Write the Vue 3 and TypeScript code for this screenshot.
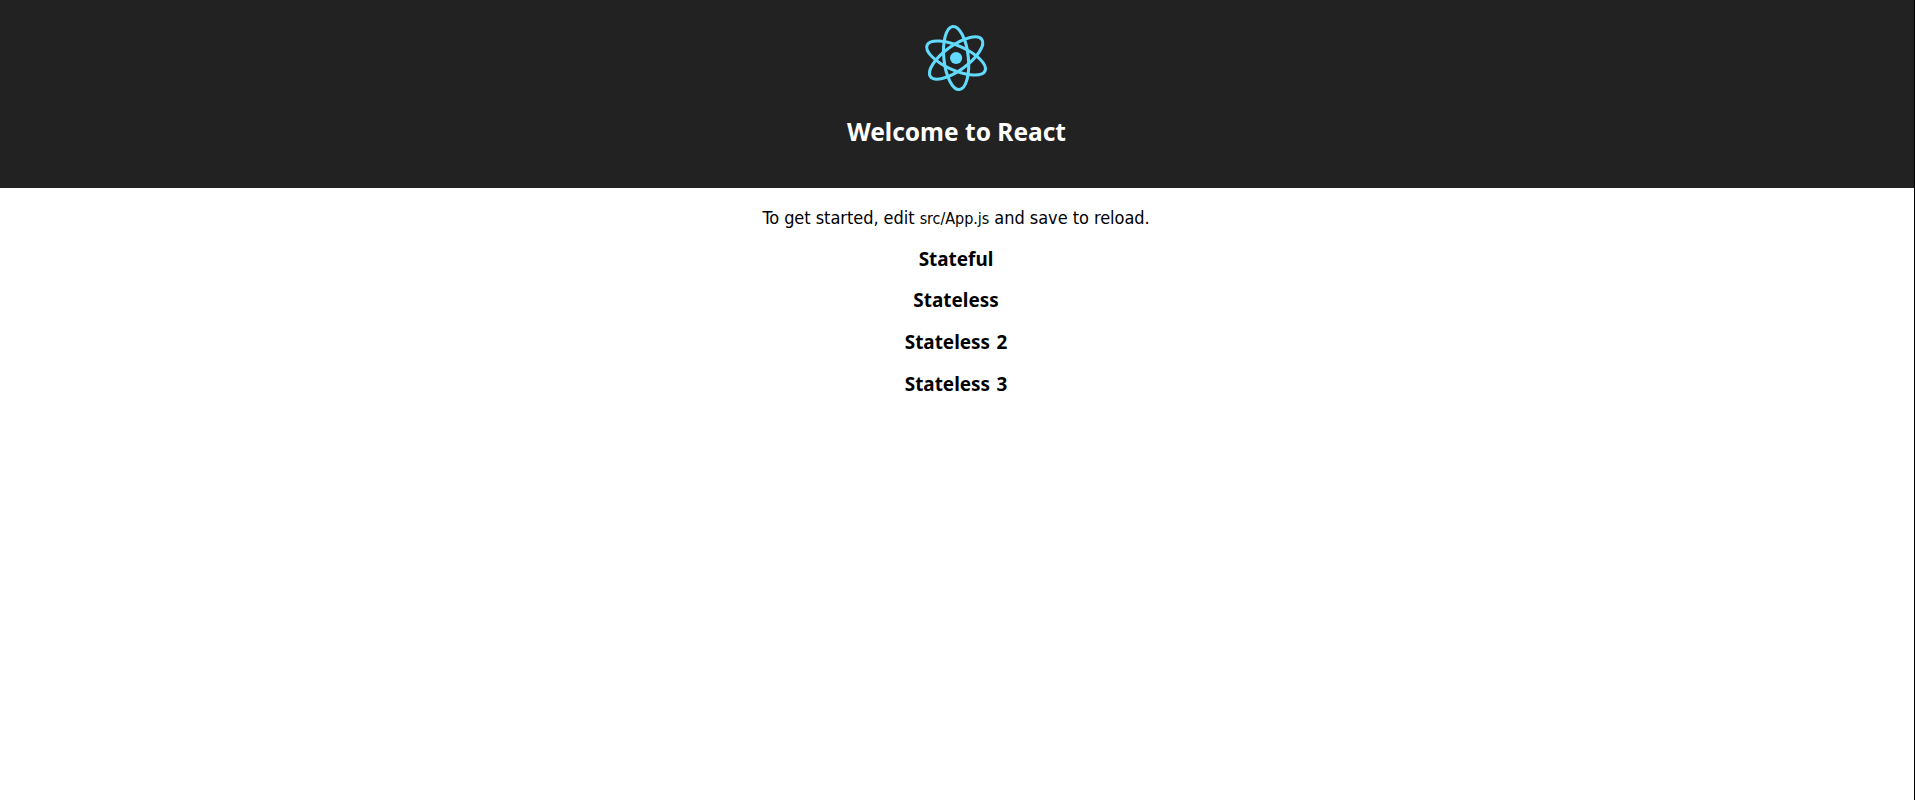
<script setup lang="ts">
interface Entry {
  id: number
  label: string
}

const entries: Entry[] = [
  { id: 1, label: 'Stateful' },
  { id: 2, label: 'Stateless' },
  { id: 3, label: 'Stateless 2' },
  { id: 4, label: 'Stateless 3' },
]

const orbits: number[] = [24, 84, 144]
</script>

<template>
  <div class="app">
    <header class="header">
      <svg class="logo" viewBox="-14 -14 28 28" aria-label="logo">
        <circle r="2.13" fill="#61dafb" />
        <g fill="none" stroke="#61dafb" stroke-width="1.08">
          <ellipse v-for="a in orbits" :key="a" rx="11.1" ry="4.28" :transform="`rotate(${a})`" />
        </g>
      </svg>
      <h2 class="title">Welcome to React</h2>
    </header>
    <main class="content">
      <p class="intro">To get started, edit <code>src/App.js</code> and save to reload.</p>
      <h3 v-for="entry in entries" :key="entry.id" class="entry">{{ entry.label }}</h3>
    </main>
  </div>
</template>

<style>
body {
  margin: 0;
  background: #fff;
}
</style>

<style scoped>
.app {
  box-sizing: border-box;
  height: 800px;
  border-right: 1px solid #000;
  overflow: hidden;
  text-align: center;
  color: #000;
  font-family: "Noto Sans", Tahoma, sans-serif;
}
.header {
  box-sizing: border-box;
  height: 188px;
  padding: 18px 1px 0 0;
  background: #222;
  color: #fff;
}
.content {
  padding-right: 2px;
}
.logo {
  display: block;
  width: 80px;
  height: 80px;
  margin: 0 auto;
  transform: translateX(-0.9px);
}
.title {
  margin: 19px 0 0;
  font-size: 24.5px;
  line-height: 29px;
}
.intro {
  margin: 20px 0 18.5px;
  font-family: "DejaVu Sans Condensed", "DejaVu Sans", sans-serif;
  font-stretch: condensed;
  font-size: 18px;
  line-height: 20px;
  letter-spacing: -0.04px;
}
.intro code {
  font-family: inherit;
  font-size: 16px;
}
.entry {
  margin: 0 0 18.7px;
  font-size: 18.9px;
  line-height: 23px;
  word-spacing: 1.5px;
}
</style>
